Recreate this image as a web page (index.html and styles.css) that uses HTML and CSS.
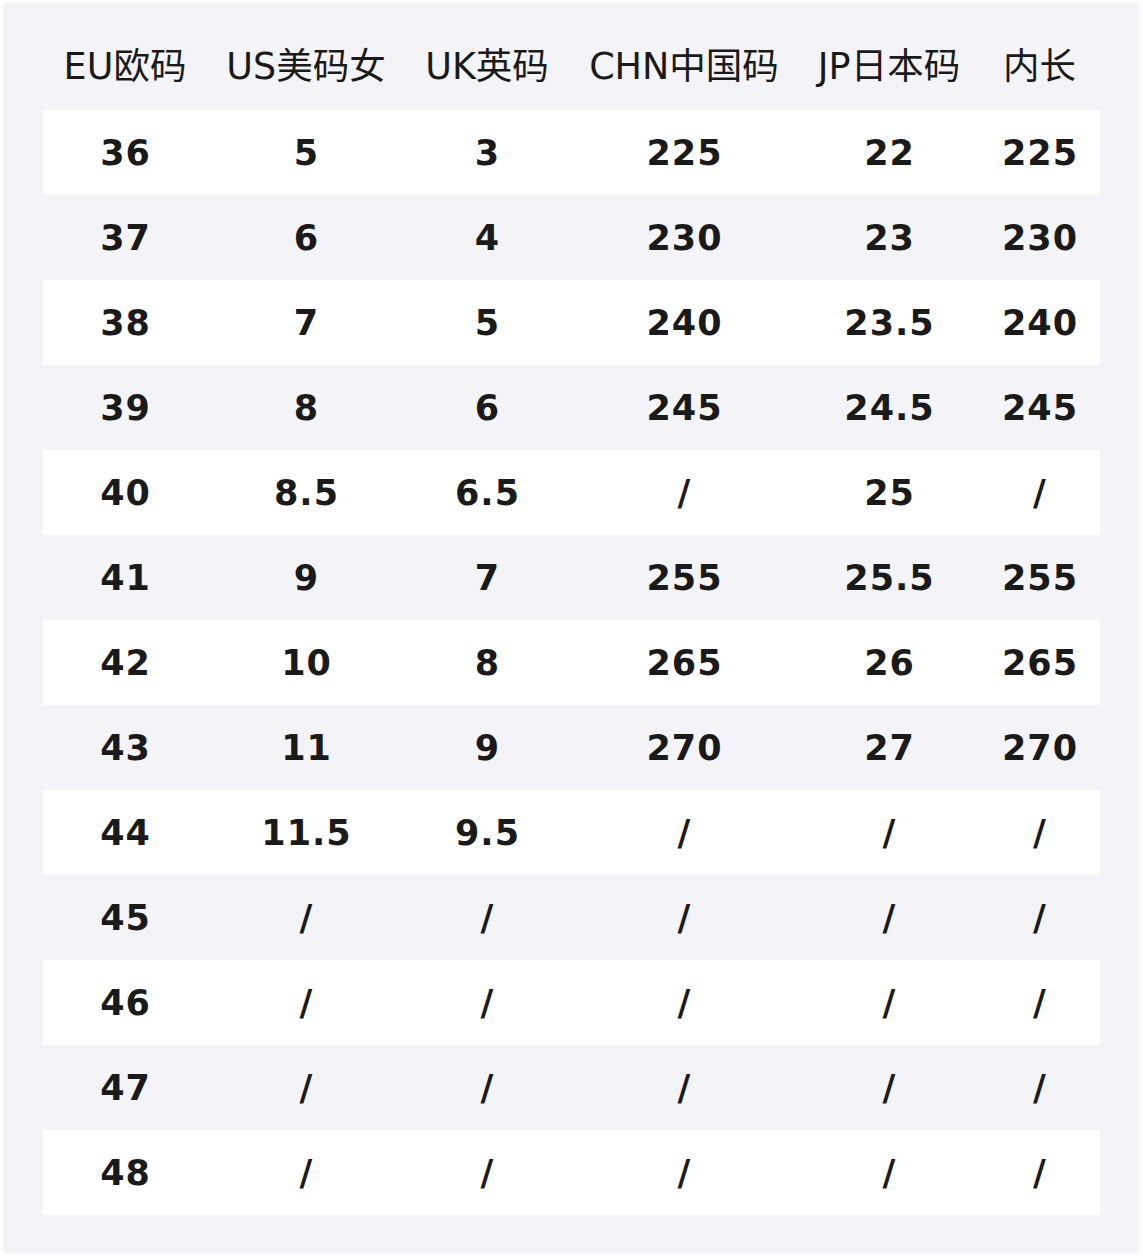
FILE: index.html
```html
<!DOCTYPE html>
<html lang="zh">
<head>
<meta charset="utf-8">
<link rel="stylesheet" href="styles.css">
</head>
<body>
<div class="panel">
  <div class="table">
    <div class="row head">
      <div>EU欧码</div><div>US美码女</div><div>UK英码</div><div>CHN中国码</div><div>JP日本码</div><div>内长</div>
    </div>
    <div class="row w"><div>36</div><div>5</div><div>3</div><div>225</div><div>22</div><div>225</div></div>
    <div class="row"><div>37</div><div>6</div><div>4</div><div>230</div><div>23</div><div>230</div></div>
    <div class="row w"><div>38</div><div>7</div><div>5</div><div>240</div><div>23.5</div><div>240</div></div>
    <div class="row"><div>39</div><div>8</div><div>6</div><div>245</div><div>24.5</div><div>245</div></div>
    <div class="row w"><div>40</div><div>8.5</div><div>6.5</div><div>/</div><div>25</div><div>/</div></div>
    <div class="row"><div>41</div><div>9</div><div>7</div><div>255</div><div>25.5</div><div>255</div></div>
    <div class="row w"><div>42</div><div>10</div><div>8</div><div>265</div><div>26</div><div>265</div></div>
    <div class="row"><div>43</div><div>11</div><div>9</div><div>270</div><div>27</div><div>270</div></div>
    <div class="row w"><div>44</div><div>11.5</div><div>9.5</div><div>/</div><div>/</div><div>/</div></div>
    <div class="row"><div>45</div><div>/</div><div>/</div><div>/</div><div>/</div><div>/</div></div>
    <div class="row w"><div>46</div><div>/</div><div>/</div><div>/</div><div>/</div><div>/</div></div>
    <div class="row"><div>47</div><div>/</div><div>/</div><div>/</div><div>/</div><div>/</div></div>
    <div class="row w"><div>48</div><div>/</div><div>/</div><div>/</div><div>/</div><div>/</div></div>
  </div>
</div>
</body>
</html>
```

FILE: styles.css
```css
html, body {
  margin: 0;
  padding: 0;
  background: #ffffff;
}
body {
  padding: 3px 4px 5px 3px;
  width: 1143px;
  height: 1258px;
  box-sizing: border-box;
  font-family: "DejaVu Sans", "Noto Sans CJK SC", sans-serif;
  color: #1a1a1a;
}
.panel {
  background: #f3f3f8;
  width: 1136px;
  height: 1250px;
  box-sizing: border-box;
  padding: 0 39px 0 40px;
}
.table {
  display: flex;
  flex-direction: column;
}
.row {
  display: grid;
  grid-template-columns: 164px 198px 164px 230px 180px 121px;
  height: 85px;
  align-items: center;
  font-weight: bold;
  font-size: 35px;
  letter-spacing: 1px;
}
.row > div {
  text-align: center;
  white-space: nowrap;
  padding-left: 1px;
}
.row.w {
  background: #ffffff;
}
.row.head {
  height: 107px;
  font-weight: normal;
  font-size: 36.5px;
  letter-spacing: 0;
  align-items: start;
  padding-top: 44px;
  box-sizing: border-box;
  line-height: 40px;
}
.row.head > div {
  padding-left: 0;
}
```
